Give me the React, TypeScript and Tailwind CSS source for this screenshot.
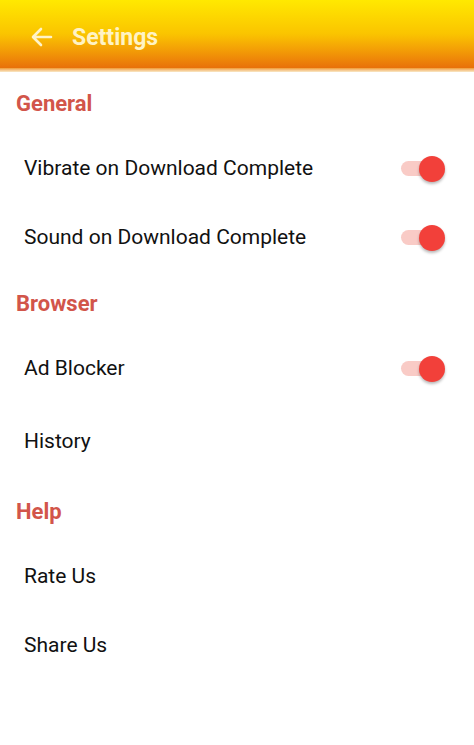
import React from "react";

function Toggle() {
  return (
    <div className="relative w-[44px] h-[28px] mr-[29px] flex items-center">
      <div className="w-[36px] h-[15px] rounded-full bg-[#f9cbc6]" />
      <div className="absolute right-0 top-[1px] w-[26px] h-[26px] rounded-full bg-[#f2403a] shadow-[0_2px_3px_rgba(0,0,0,0.28)]" />
    </div>
  );
}

function Category({ title }: { title: string }) {
  return (
    <div className="h-[62px] pl-[16px] pt-[19px]">
      <div className="text-[22px] leading-[26px] font-bold text-[#d2554a]">{title}</div>
    </div>
  );
}

function Row({ label, toggle, h = "h-[69px]" }: { label: string; toggle?: boolean; h?: string }) {
  return (
    <div className={`${h} pl-[24px] flex items-center justify-between`}>
      <span className="text-[21px] text-[#111111]">{label}</span>
      {toggle && <Toggle />}
    </div>
  );
}

export default function App() {
  return (
    <div className="w-[474px] h-[745px] bg-white overflow-hidden" style={{ fontFamily: "Roboto, 'Noto Sans', sans-serif" }}>
      <div className="h-[72px] flex flex-col">
        <div className="h-[68px] flex items-center bg-gradient-to-b from-[#ffe900] via-[#fac400] to-[#e8700a] pl-[31px] pt-[6px]">
          <svg width="22" height="20" viewBox="0 0 22 20" fill="none" stroke="#fff3c8" strokeWidth="2.6" strokeLinecap="round" strokeLinejoin="round">
            <path d="M20 10H2.5M10 2L2 10l8 8" />
          </svg>
          <span className="ml-[19px] text-[23px] font-bold text-[#fff3c4] leading-none">Settings</span>
        </div>
        <div className="h-[4px] bg-gradient-to-b from-[#f09a2a] to-[#f8e9c8]" />
      </div>
      <Category title="General" />
      <Row label="Vibrate on Download Complete" toggle />
      <Row label="Sound on Download Complete" toggle />
      <Category title="Browser" />
      <Row label="Ad Blocker" toggle />
      <Row label="History" h="h-[77px]" />
      <Category title="Help" />
      <Row label="Rate Us" />
      <Row label="Share Us" />
    </div>
  );
}
